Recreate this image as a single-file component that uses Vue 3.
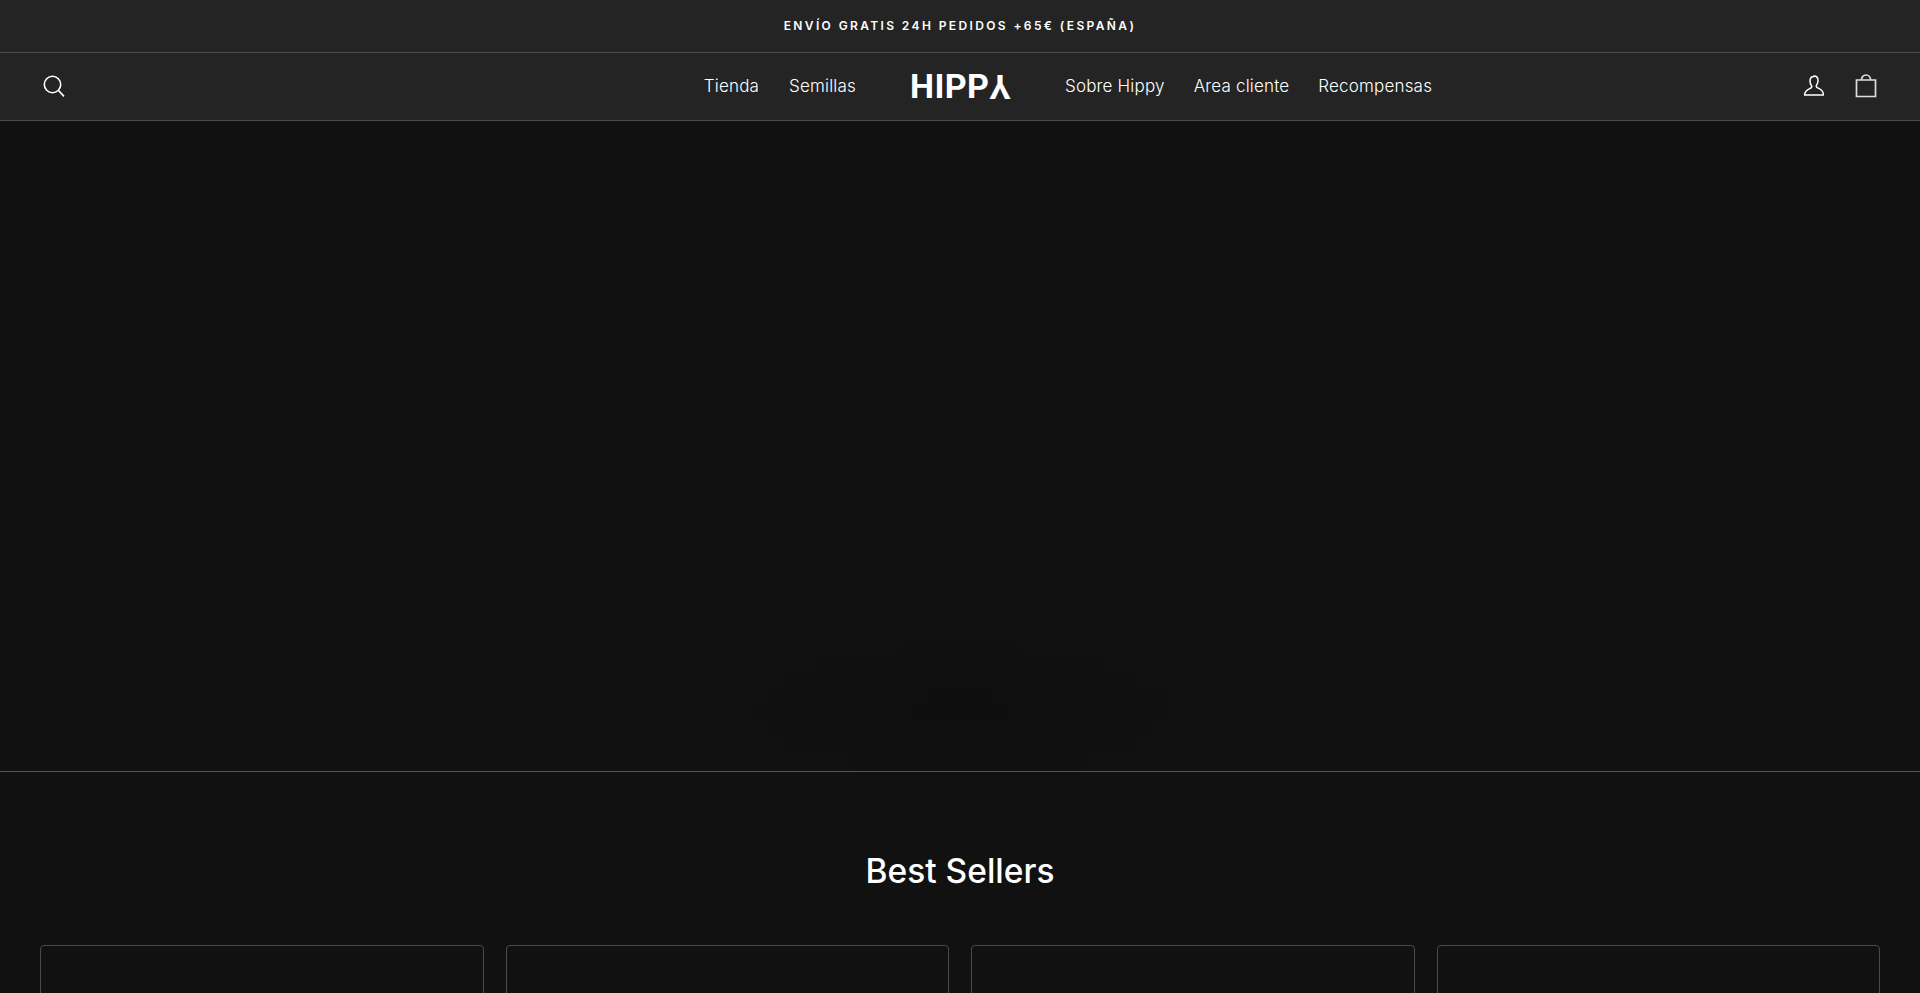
<script setup>
const leftLinks = ["Tienda", "Semillas"];
const rightLinks = ["Sobre Hippy", "Area cliente", "Recompensas"];
const cards = [1, 2, 3, 4];

// stepped shadow behind the hero, one list per darkness level: [x, y, w, h]
const blobLevels = [
  [
    [144, 0, 126, 16], [64, 15, 286, 16], [32, 31, 350, 16], [16, 47, 398, 16],
    [0, 63, 414, 16], [16, 79, 382, 16], [32, 95, 350, 16], [96, 111, 238, 19],
  ],
  [
    [128, 31, 158, 16], [80, 47, 254, 32], [96, 79, 222, 16], [144, 95, 126, 16],
  ],
  [
    [176, 47, 62, 16], [160, 63, 94, 16],
  ],
];
</script>

<template>
  <div class="page">
    <div class="announcement">ENVÍO GRATIS 24H PEDIDOS +65€ (ESPAÑA)</div>

    <header class="site-header">
      <div class="header-side">
        <a class="icon-link" aria-label="Buscar">
          <svg width="22" height="22" viewBox="0 0 22 22" fill="none" stroke="#fff" stroke-width="1.6">
            <circle cx="9.5" cy="9.500" r="8.2" />
            <path d="M15.4 15.4 21 21.4" />
          </svg>
        </a>
        <nav class="nav-group">
          <a v-for="link in leftLinks" :key="link" class="nav-link">{{ link }}</a>
        </nav>
      </div>

      <a class="logo">HIPP<span class="logo-y">Y</span></a>

      <div class="header-side">
        <nav class="nav-group nav-right">
          <a v-for="link in rightLinks" :key="link" class="nav-link">{{ link }}</a>
        </nav>
        <div class="header-icons">
          <a class="icon-link" aria-label="Cuenta">
            <svg width="22" height="22" viewBox="0 0 22 22" fill="none" stroke="#fff" stroke-width="1.5">
              <path d="M11 1.500c-2.700 0-4 1.900-4 4.400 0 2 .6 3.600 1.500 4.800.4.600.4 1.500-.2 2-1.300 1.100-6 2-6.600 6.300V20h18.600v-1.500c-.6-4.300-5.300-5.200-6.600-6.300-.6-.5-.6-1.400-.2-2 .9-1.200 1.500-2.800 1.500-4.800 0-2.500-1.300-4.400-4-4.400Z" />
            </svg>
          </a>
          <a class="icon-link" aria-label="Carrito">
            <svg width="22" height="24" viewBox="0 0 22 24" fill="none" stroke="#ddd" stroke-width="1.7">
              <path d="M1.500 6h19v16.500h-19z" />
              <path d="M6.500 6V5.500a4.500 4.500 0 0 1 9 0V6" />
            </svg>
          </a>
        </div>
      </div>
    </header>

    <section class="hero">
      <svg class="hero-blob" width="414" height="130" viewBox="0 0 414 130" aria-hidden="true">
        <g v-for="(level, i) in blobLevels" :key="i" fill="#000" fill-opacity="0.06">
          <rect v-for="r in level" :key="r.join()" :x="r[0]" :y="r[1]" :width="r[2]" :height="r[3]" />
        </g>
      </svg>
    </section>

    <section class="best-sellers">
      <h2>Best Sellers</h2>
      <div class="cards">
        <div v-for="card in cards" :key="card" class="card"></div>
      </div>
    </section>
  </div>
</template>

<style>
html, body {
  margin: 0;
  background: #111;
  overflow: hidden;
}
</style>

<style scoped>
.page {
  height: 993px;
  overflow: hidden;
  background: #111;
  color: #fff;
  font-family: "Inter", "Noto Sans", sans-serif;
}
.announcement {
  height: 52px;
  line-height: 52px;
  text-align: center;
  background: #242424;
  border-bottom: 1px solid #4a4a4a;
  font-size: 12px;
  font-weight: 600;
  letter-spacing: 2.38px;
}
.site-header {
  height: 67px;
  display: grid;
  grid-template-columns: 1fr 100px 1fr;
  column-gap: 54px;
  align-items: center;
  padding: 0 43px;
  background: #242424;
  border-bottom: 1px solid #4a4a4a;
}
.header-side {
  display: flex;
  align-items: center;
  justify-content: space-between;
  margin-top: -2px;
}
.header-icons {
  display: flex;
  gap: 30px;
  align-items: center;
}
.icon-link {
  display: flex;
}
.nav-group {
  display: flex;
  gap: 30px;
}
.nav-right {
  gap: 29px;
  padding-left: 1px;
}
.nav-link {
  font-size: 17px;
  font-weight: 300;
  letter-spacing: 0.18px;
  white-space: nowrap;
}
.logo {
  margin-top: -1px;
  text-align: center;
  font-family: "Roboto", "Liberation Sans", sans-serif;
  font-size: 34px;
  font-weight: 700;
  letter-spacing: 0.4px;
  line-height: 35px;
  white-space: nowrap;
}
.logo-y {
  display: inline-block;
  transform: rotate(180deg);
}
.hero {
  position: relative;
  height: 650px;
  border-bottom: 1px solid #555;
}
.hero-blob {
  position: absolute;
  left: 50%;
  bottom: 0;
  transform: translateX(-50%);
}
.best-sellers {
  padding-top: 79px;
}
h2 {
  margin: 0 0 54px;
  text-align: center;
  font-size: 33.5px;
  line-height: 40px;
  font-weight: 500;
}
.cards {
  display: grid;
  grid-template-columns: repeat(4, 1fr);
  gap: 22px;
  padding: 0 40px;
}
.card {
  height: 420px;
  border: 1px solid #4a4a4a;
  border-radius: 4px;
}
</style>
